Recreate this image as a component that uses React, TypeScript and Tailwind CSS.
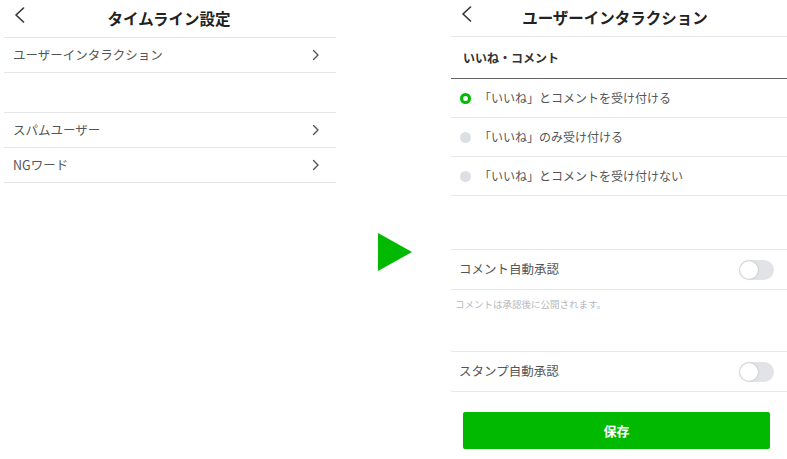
import type { ReactNode } from "react";

const font = { fontFamily: '"Noto Sans CJK JP", "Noto Sans", sans-serif' };

function BackIcon() {
  return (
    <svg width="11" height="16" viewBox="0 0 11 16" fill="none">
      <path d="M9.5 1 L2 8 L9.5 15" stroke="#333" strokeWidth="1.6" strokeLinecap="round" strokeLinejoin="round" />
    </svg>
  );
}

function Chevron() {
  return (
    <svg width="8" height="12" viewBox="0 0 8 12" fill="none">
      <path d="M1.5 1.5 L6 6 L1.5 10.5" stroke="#555" strokeWidth="1.4" strokeLinecap="round" strokeLinejoin="round" />
    </svg>
  );
}

function NavRow({ label }: { label: string }) {
  return (
    <div className="flex h-[35px] items-center justify-between border-b border-[#e6e6e6] pl-[9px] pr-[16px]">
      <span className="text-[12.5px] text-[#555]">{label}</span>
      <Chevron />
    </div>
  );
}

function Radio({ checked, label }: { checked?: boolean; label: string }) {
  return (
    <div className="flex h-[39px] items-center gap-[8px] border-b border-[#e8e8e8] pl-[9px]">
      {checked ? (
        <span className="h-[11px] w-[11px] rounded-full border-[3px] border-[#00b900] bg-white" />
      ) : (
        <span className="h-[11px] w-[11px] rounded-full bg-[#dcdfe4]" />
      )}
      <span className="text-[12px] text-[#555]">{label}</span>
    </div>
  );
}

function ToggleRow({ label }: { label: string }) {
  return (
    <div className="flex h-[40px] items-center justify-between border-b border-[#e8e8e8] pl-[8px] pr-[13px]">
      <span className="text-[12.5px] text-[#555]">{label}</span>
      <span className="relative h-[20px] w-[35px] rounded-full bg-[#e1e3e7]">
        <span className="absolute left-[1px] top-[1px] h-[18px] w-[18px] rounded-full bg-white shadow-[0_0_2px_rgba(0,0,0,0.25)]" />
      </span>
    </div>
  );
}

function Header({ children, className }: { children: ReactNode; className?: string }) {
  return (
    <div className={"relative flex items-center justify-center border-b border-[#e6e6e6] " + (className ?? "")}>
      {children}
    </div>
  );
}

export default function App() {
  return (
    <div className="flex h-[459px] w-[787px] bg-white" style={font}>
      {/* Left screen */}
      <div className="ml-[4px] w-[332px]">
        <Header className="h-[38px]">
          <span className="absolute left-[10px] top-[7px]">
            <BackIcon />
          </span>
          <span className="pr-[2px] text-[15.5px] font-bold text-[#222]">タイムライン設定</span>
        </Header>
        <NavRow label="ユーザーインタラクション" />
        <div className="h-[40px] border-b border-[#e6e6e6]" />
        <NavRow label="スパムユーザー" />
        <NavRow label="NGワード" />
      </div>

      {/* Arrow */}
      <div className="flex flex-1 items-start justify-center pt-[233px]">
        <svg width="34" height="38" viewBox="0 0 34 38" className="ml-[2px]">
          <polygon points="0,0 34,19 0,38" fill="#00b900" />
        </svg>
      </div>

      {/* Right screen */}
      <div className="w-[336px]">
        <Header className="h-[37px]">
          <span className="absolute left-[10px] top-[6px]">
            <BackIcon />
          </span>
          <span className="pr-[8px] text-[15.5px] font-bold text-[#222]">ユーザーインタラクション</span>
        </Header>
        <div className="flex h-[42px] items-center border-b-[1.5px] border-[#666] pl-[12px]">
          <span className="text-[12px] font-bold text-[#333]">いいね・コメント</span>
        </div>
        <Radio checked label="「いいね」とコメントを受け付ける" />
        <Radio label="「いいね」のみ受け付ける" />
        <Radio label="「いいね」とコメントを受け付けない" />
        <div className="h-[54px] border-b border-[#e8e8e8]" />
        <ToggleRow label="コメント自動承認" />
        <div className="h-[62px] border-b border-[#e8e8e8] pl-[4px] pt-[8px]">
          <p className="text-[9.5px] leading-[12px] text-[#b5b9bf]">コメントは承認後に公開されます。</p>
        </div>
        <ToggleRow label="スタンプ自動承認" />
        <div className="pl-[12px] pr-[17px] pt-[20px]">
          <button className="flex h-[37px] w-full items-center justify-center rounded-[2px] bg-[#00b900] text-[13px] font-bold text-white">
            保存
          </button>
        </div>
      </div>
    </div>
  );
}
